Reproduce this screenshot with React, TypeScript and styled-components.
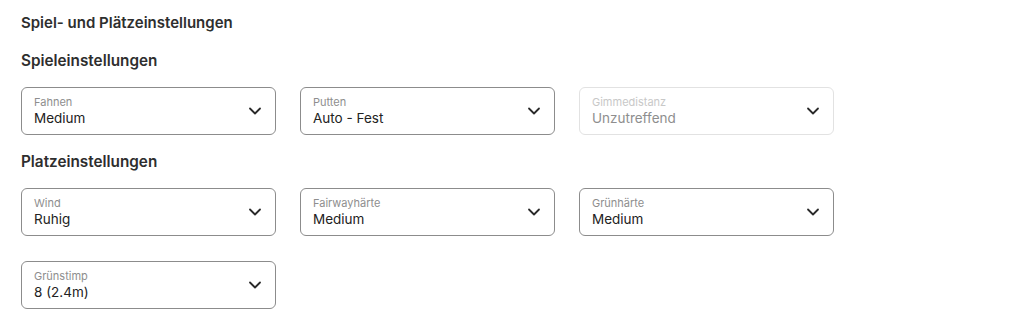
import React from 'react';
import styled, { createGlobalStyle } from 'styled-components';

const GlobalStyle = createGlobalStyle`
  body {
    margin: 0;
    background: #fff;
    font-family: Inter, "Noto Sans", sans-serif;
    color: #2b2b2b;
  }
`;

const Page = styled.div`
  padding: 13px 21px;
`;

const Title = styled.h2`
  margin: 0 0 18px;
  font-size: 15px;
  line-height: 20px;
  font-weight: 600;
  color: #2e2e2e;
`;

const SectionTitle = styled.h3`
  margin: 0 0 16px;
  font-size: 15.3px;
  line-height: 20px;
  font-weight: 600;
  color: #2e2e2e;
`;

const Grid = styled.div`
  display: grid;
  grid-template-columns: repeat(3, 255px);
  column-gap: 24px;
  row-gap: 25px;
  margin-bottom: 17px;
`;

const SelectBox = styled.div<{ $disabled?: boolean }>`
  box-sizing: border-box;
  height: 48px;
  border: 1px solid ${({ $disabled }) => ($disabled ? '#e2e2e2' : '#8c8c8c')};
  border-radius: 6px;
  padding: 0 13px 0 12px;
  display: flex;
  align-items: center;
  justify-content: space-between;
  background: #fff;
`;

const Texts = styled.div`
  display: flex;
  flex-direction: column;
  margin-top: -1px;
`;

const Label = styled.span<{ $disabled?: boolean }>`
  font-size: 11px;
  line-height: 14px;
  color: ${({ $disabled }) => ($disabled ? '#c8c8c8' : '#8e8e8e')};
`;

const Value = styled.span<{ $disabled?: boolean }>`
  font-size: 13.5px;
  line-height: 18px;
  color: ${({ $disabled }) => ($disabled ? '#8e8e8e' : '#222')};
`;

const Chevron = () => (
  <svg width="14" height="14" viewBox="0 0 14 14" fill="none">
    <path d="M2 4.5 L7 9.5 L12 4.5" stroke="#2a2a2a" strokeWidth="1.8" strokeLinecap="round" strokeLinejoin="round" />
  </svg>
);

interface IFieldProps {
  label: string;
  value: string;
  disabled?: boolean;
}

function Field({ label, value, disabled }: IFieldProps) {
  return (
    <SelectBox $disabled={disabled}>
      <Texts>
        <Label $disabled={disabled}>{label}</Label>
        <Value $disabled={disabled}>{value}</Value>
      </Texts>
      <Chevron />
    </SelectBox>
  );
}

export default function App() {
  return (
    <>
      <GlobalStyle />
      <Page>
        <Title>Spiel- und Plätzeinstellungen</Title>
        <SectionTitle>Spieleinstellungen</SectionTitle>
        <Grid>
          <Field label="Fahnen" value="Medium" />
          <Field label="Putten" value="Auto - Fest" />
          <Field label="Gimmedistanz" value="Unzutreffend" disabled />
        </Grid>
        <SectionTitle>Platzeinstellungen</SectionTitle>
        <Grid>
          <Field label="Wind" value="Ruhig" />
          <Field label="Fairwayhärte" value="Medium" />
          <Field label="Grünhärte" value="Medium" />
          <Field label="Grünstimp" value="8 (2.4m)" />
        </Grid>
      </Page>
    </>
  );
}
